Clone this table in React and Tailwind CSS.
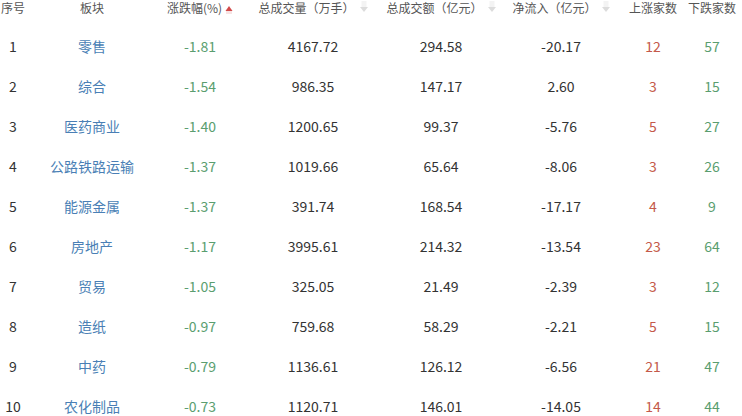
const rows = [
  [1, '零售', '-1.81', '4167.72', '294.58', '-20.17', 12, 57],
  [2, '综合', '-1.54', '986.35', '147.17', '2.60', 3, 15],
  [3, '医药商业', '-1.40', '1200.65', '99.37', '-5.76', 5, 27],
  [4, '公路铁路运输', '-1.37', '1019.66', '65.64', '-8.06', 3, 26],
  [5, '能源金属', '-1.37', '391.74', '168.54', '-17.17', 4, 9],
  [6, '房地产', '-1.17', '3995.61', '214.32', '-13.54', 23, 64],
  [7, '贸易', '-1.05', '325.05', '21.49', '-2.39', 3, 12],
  [8, '造纸', '-0.97', '759.68', '58.29', '-2.21', 5, 15],
  [9, '中药', '-0.79', '1136.61', '126.12', '-6.56', 21, 47],
  [10, '农化制品', '-0.73', '1120.71', '146.01', '-14.05', 14, 44],
];

const cols = 'grid grid-cols-[26px_132px_84px_142px_114px_126px_58px_60px]';

const UpArrow = () => (
  <svg width="8" height="12" viewBox="0 0 8 12" className="ml-[3px]">
    <path d="M4 4 L7.5 9 L0.5 9 Z" fill="#d24a4a" />
    <rect x="1" y="9" width="6" height="3" fill="#f7e3e3" />
  </svg>
);

const DownArrow = () => (
  <svg width="8" height="14" viewBox="0 0 8 14" className="ml-[5px]">
    <rect x="1.5" y="0" width="5" height="7" fill="#f3f3f3" />
    <path d="M0 6 L8 6 L4 11 Z" fill="#dcdcdc" />
  </svg>
);

const headers = [
  { label: '序号' },
  { label: '板块' },
  { label: '涨跌幅(%)', icon: <UpArrow /> },
  { label: '总成交量（万手）', icon: <DownArrow /> },
  { label: '总成交额（亿元）', icon: <DownArrow /> },
  { label: '净流入（亿元）', icon: <DownArrow /> },
  { label: '上涨家数' },
  { label: '下跌家数' },
];

export default function App() {
  return (
    <div className="w-[742px] h-[416px] overflow-hidden bg-white font-['Microsoft_YaHei','Noto_Sans_CJK_SC',sans-serif]">
      {/* header */}
      <div className={`${cols} h-[16px] text-[12px] leading-[16px] text-[#555]`}>
        {headers.map(h => (
          <div key={h.label} className="flex items-center justify-center whitespace-nowrap">
            {h.label}
            {h.icon}
          </div>
        ))}
      </div>

      {/* rows */}
      <div className="pt-[10px]">
        {rows.map(r => (
          <div key={r[0]} className={`${cols} h-[40px] items-center text-[14px] leading-[20px] text-[#333]`}>
            <div className="text-center">{r[0]}</div>
            <div className="text-center text-[#4a7fb5]">{r[1]}</div>
            <div className="text-center text-[#5a9e6f]">{r[2]}</div>
            <div className="text-center">{r[3]}</div>
            <div className="text-center">{r[4]}</div>
            <div className="text-center">{r[5]}</div>
            <div className="text-center text-[#c4594a]">{r[6]}</div>
            <div className="text-center text-[#5a9e6f]">{r[7]}</div>
          </div>
        ))}
      </div>
    </div>
  );
}
